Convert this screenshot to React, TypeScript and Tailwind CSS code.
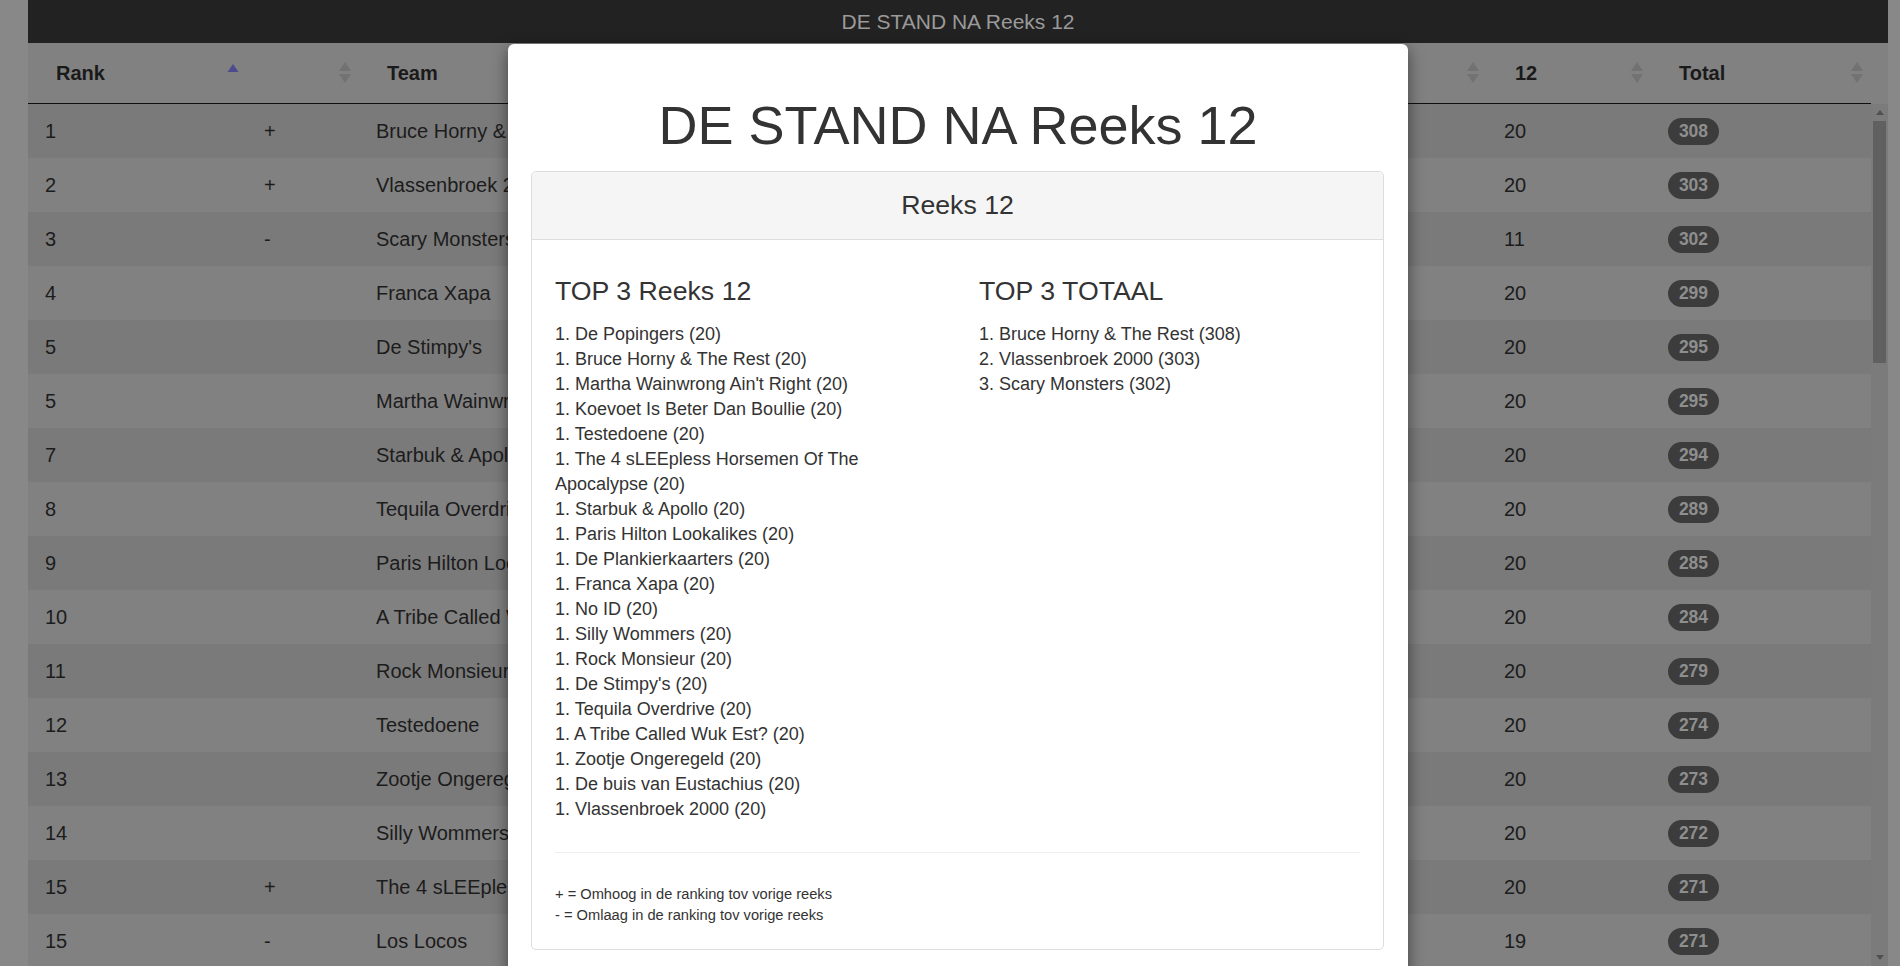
import React from "react";

const rows: [string, string, string, string, string][] = [
  ["1", "+", "Bruce Horny & The Rest", "20", "308"],
  ["2", "+", "Vlassenbroek 2000", "20", "303"],
  ["3", "-", "Scary Monsters", "11", "302"],
  ["4", "", "Franca Xapa", "20", "299"],
  ["5", "", "De Stimpy's", "20", "295"],
  ["5", "", "Martha Wainwrong Ain't Right", "20", "295"],
  ["7", "", "Starbuk & Apollo", "20", "294"],
  ["8", "", "Tequila Overdrive", "20", "289"],
  ["9", "", "Paris Hilton Lookalikes", "20", "285"],
  ["10", "", "A Tribe Called Wuk Est?", "20", "284"],
  ["11", "", "Rock Monsieur", "20", "279"],
  ["12", "", "Testedoene", "20", "274"],
  ["13", "", "Zootje Ongeregeld", "20", "273"],
  ["14", "", "Silly Wommers", "20", "272"],
  ["15", "+", "The 4 sLEEpless Horsemen Of The Apocalypse", "20", "271"],
  ["15", "-", "Los Locos", "19", "271"],
];

const top3Reeks = [
  "De Popingers",
  "Bruce Horny & The Rest",
  "Martha Wainwrong Ain't Right",
  "Koevoet Is Beter Dan Boullie",
  "Testedoene",
  "The 4 sLEEpless Horsemen Of The Apocalypse",
  "Starbuk & Apollo",
  "Paris Hilton Lookalikes",
  "De Plankierkaarters",
  "Franca Xapa",
  "No ID",
  "Silly Wommers",
  "Rock Monsieur",
  "De Stimpy's",
  "Tequila Overdrive",
  "A Tribe Called Wuk Est?",
  "Zootje Ongeregeld",
  "De buis van Eustachius",
  "Vlassenbroek 2000",
];

const top3Totaal = [
  "1. Bruce Horny & The Rest (308)",
  "2. Vlassenbroek 2000 (303)",
  "3. Scary Monsters (302)",
];

function SortBoth() {
  return (
    <svg width="12" height="22" viewBox="0 0 12 22" className="shrink-0">
      <polygon points="6,0 12,9 0,9" fill="#727272" />
      <polygon points="0,12 12,12 6,21" fill="#727272" />
    </svg>
  );
}

function SortAsc() {
  return (
    <svg width="12" height="22" viewBox="0 0 12 22" className="shrink-0">
      <polygon points="6,2 11.5,10 0.5,10" fill="#4b4b8e" />
    </svg>
  );
}

function HeadCell({ label, width, asc }: { label: string; width: string; asc?: boolean }) {
  return (
    <div className={`${width} flex h-full items-center justify-between pl-[28px] pr-[8px] shrink-0`}>
      <span className="text-[20px] font-bold text-[#1a1a1a]">{label}</span>
      {asc ? <SortAsc /> : <SortBoth />}
    </div>
  );
}

export default function App() {
  return (
    <div className="relative h-[966px] w-[1900px] overflow-hidden bg-[#888888] font-['Liberation_Sans',Arial,sans-serif]">
      <div className="ml-[28px] w-[1860px]">
        {/* title bar */}
        <div className="flex h-[43px] items-center justify-center bg-[#222222] text-[21px] text-[#9a9a9a]">
          DE STAND NA Reeks 12
        </div>

        {/* table header */}
        <div className="flex h-[61px] bg-[#818181]">
          <div className="flex w-[1843px] border-b border-[#0f0f0f]">
            <HeadCell label="Rank" width="w-[219px]" asc />
            <HeadCell label="" width="w-[112px]" />
            <HeadCell label="Team" width="w-[964px]" />
            <HeadCell label="11" width="w-[164px]" />
            <HeadCell label="12" width="w-[164px]" />
            <HeadCell label="Total" width="w-[220px]" />
          </div>
          <div className="w-[17px]" />
        </div>

        {/* table body + scrollbar */}
        <div className="flex">
          <div className="w-[1843px]">
            {rows.map((r, i) => (
              <div
                key={i}
                className={`flex h-[54px] items-center text-[20px] text-[#1c1c1c] ${
                  i % 2 === 0 ? "bg-[#7a7a7a]" : "bg-[#818181]"
                }`}
              >
                <div className="w-[219px] shrink-0 pl-[17px]">{r[0]}</div>
                <div className="w-[112px] shrink-0 pl-[17px]">{r[1]}</div>
                <div className="w-[964px] shrink-0 whitespace-nowrap pl-[17px]">{r[2]}</div>
                <div className="w-[164px] shrink-0 pl-[17px]"></div>
                <div className="w-[164px] shrink-0 pl-[17px]">{r[3]}</div>
                <div className="w-[220px] shrink-0 pl-[17px]">
                  <span className="flex h-[27px] w-[51px] items-center justify-center rounded-full bg-[#3c3c3c] text-[17.5px] font-bold text-[#8e8e8e]">
                    {r[4]}
                  </span>
                </div>
              </div>
            ))}
          </div>
          <div className="flex h-[862px] w-[17px] flex-col items-center bg-[#7b7b7b]">
            <div className="flex h-[17px] w-full items-center justify-center">
              <svg width="8" height="5" viewBox="0 0 8 5">
                <polygon points="4,0 8,5 0,5" fill="#505050" />
              </svg>
            </div>
            <div className="h-[242px] w-[13px] bg-[#606060]" />
            <div className="flex-1" />
            <div className="flex h-[17px] w-full items-center justify-center">
              <svg width="8" height="5" viewBox="0 0 8 5">
                <polygon points="0,0 8,0 4,5" fill="#505050" />
              </svg>
            </div>
          </div>
        </div>
      </div>

      {/* modal */}
      <div className="absolute left-[508px] top-[44px] h-[980px] w-[900px] rounded-[6px] bg-white px-[23px] pt-[52px] text-[#333333] shadow-[0_5px_15px_rgba(0,0,0,0.5)]">
        <h1 className="h-[59px] text-center text-[54px] leading-[59px]">DE STAND NA Reeks 12</h1>
        <div className="mt-[16px] w-[853px] rounded-[5px] border border-[#dddddd]">
          <div className="flex h-[68px] items-center justify-center rounded-t-[5px] border-b border-[#dddddd] bg-[#f5f5f5] text-[26.7px]">
            Reeks 12
          </div>
          <div className="px-[23px] pb-[23px] pt-[37px]">
            <div className="grid grid-cols-[384px_384px] gap-x-[40px]">
              <div>
                <h3 className="mb-[16px] h-[29px] text-[26.7px] leading-[29px]">TOP 3 Reeks 12</h3>
                <div className="text-[18px] leading-[25px]">
                  {top3Reeks.map((t, i) => (
                    <div key={i}>1. {t} (20)</div>
                  ))}
                </div>
              </div>
              <div>
                <h3 className="mb-[16px] h-[29px] text-[26.7px] leading-[29px]">TOP 3 TOTAAL</h3>
                <div className="text-[18px] leading-[25px]">
                  {top3Totaal.map((t, i) => (
                    <div key={i}>{t}</div>
                  ))}
                </div>
              </div>
            </div>
            <div className="mt-[30px] h-px bg-[#eeeeee]" />
            <div className="mt-[31px] text-[14.66px] leading-[21px]">
              <div>+ = Omhoog in de ranking tov vorige reeks</div>
              <div>- = Omlaag in de ranking tov vorige reeks</div>
            </div>
          </div>
        </div>
      </div>
    </div>
  );
}
